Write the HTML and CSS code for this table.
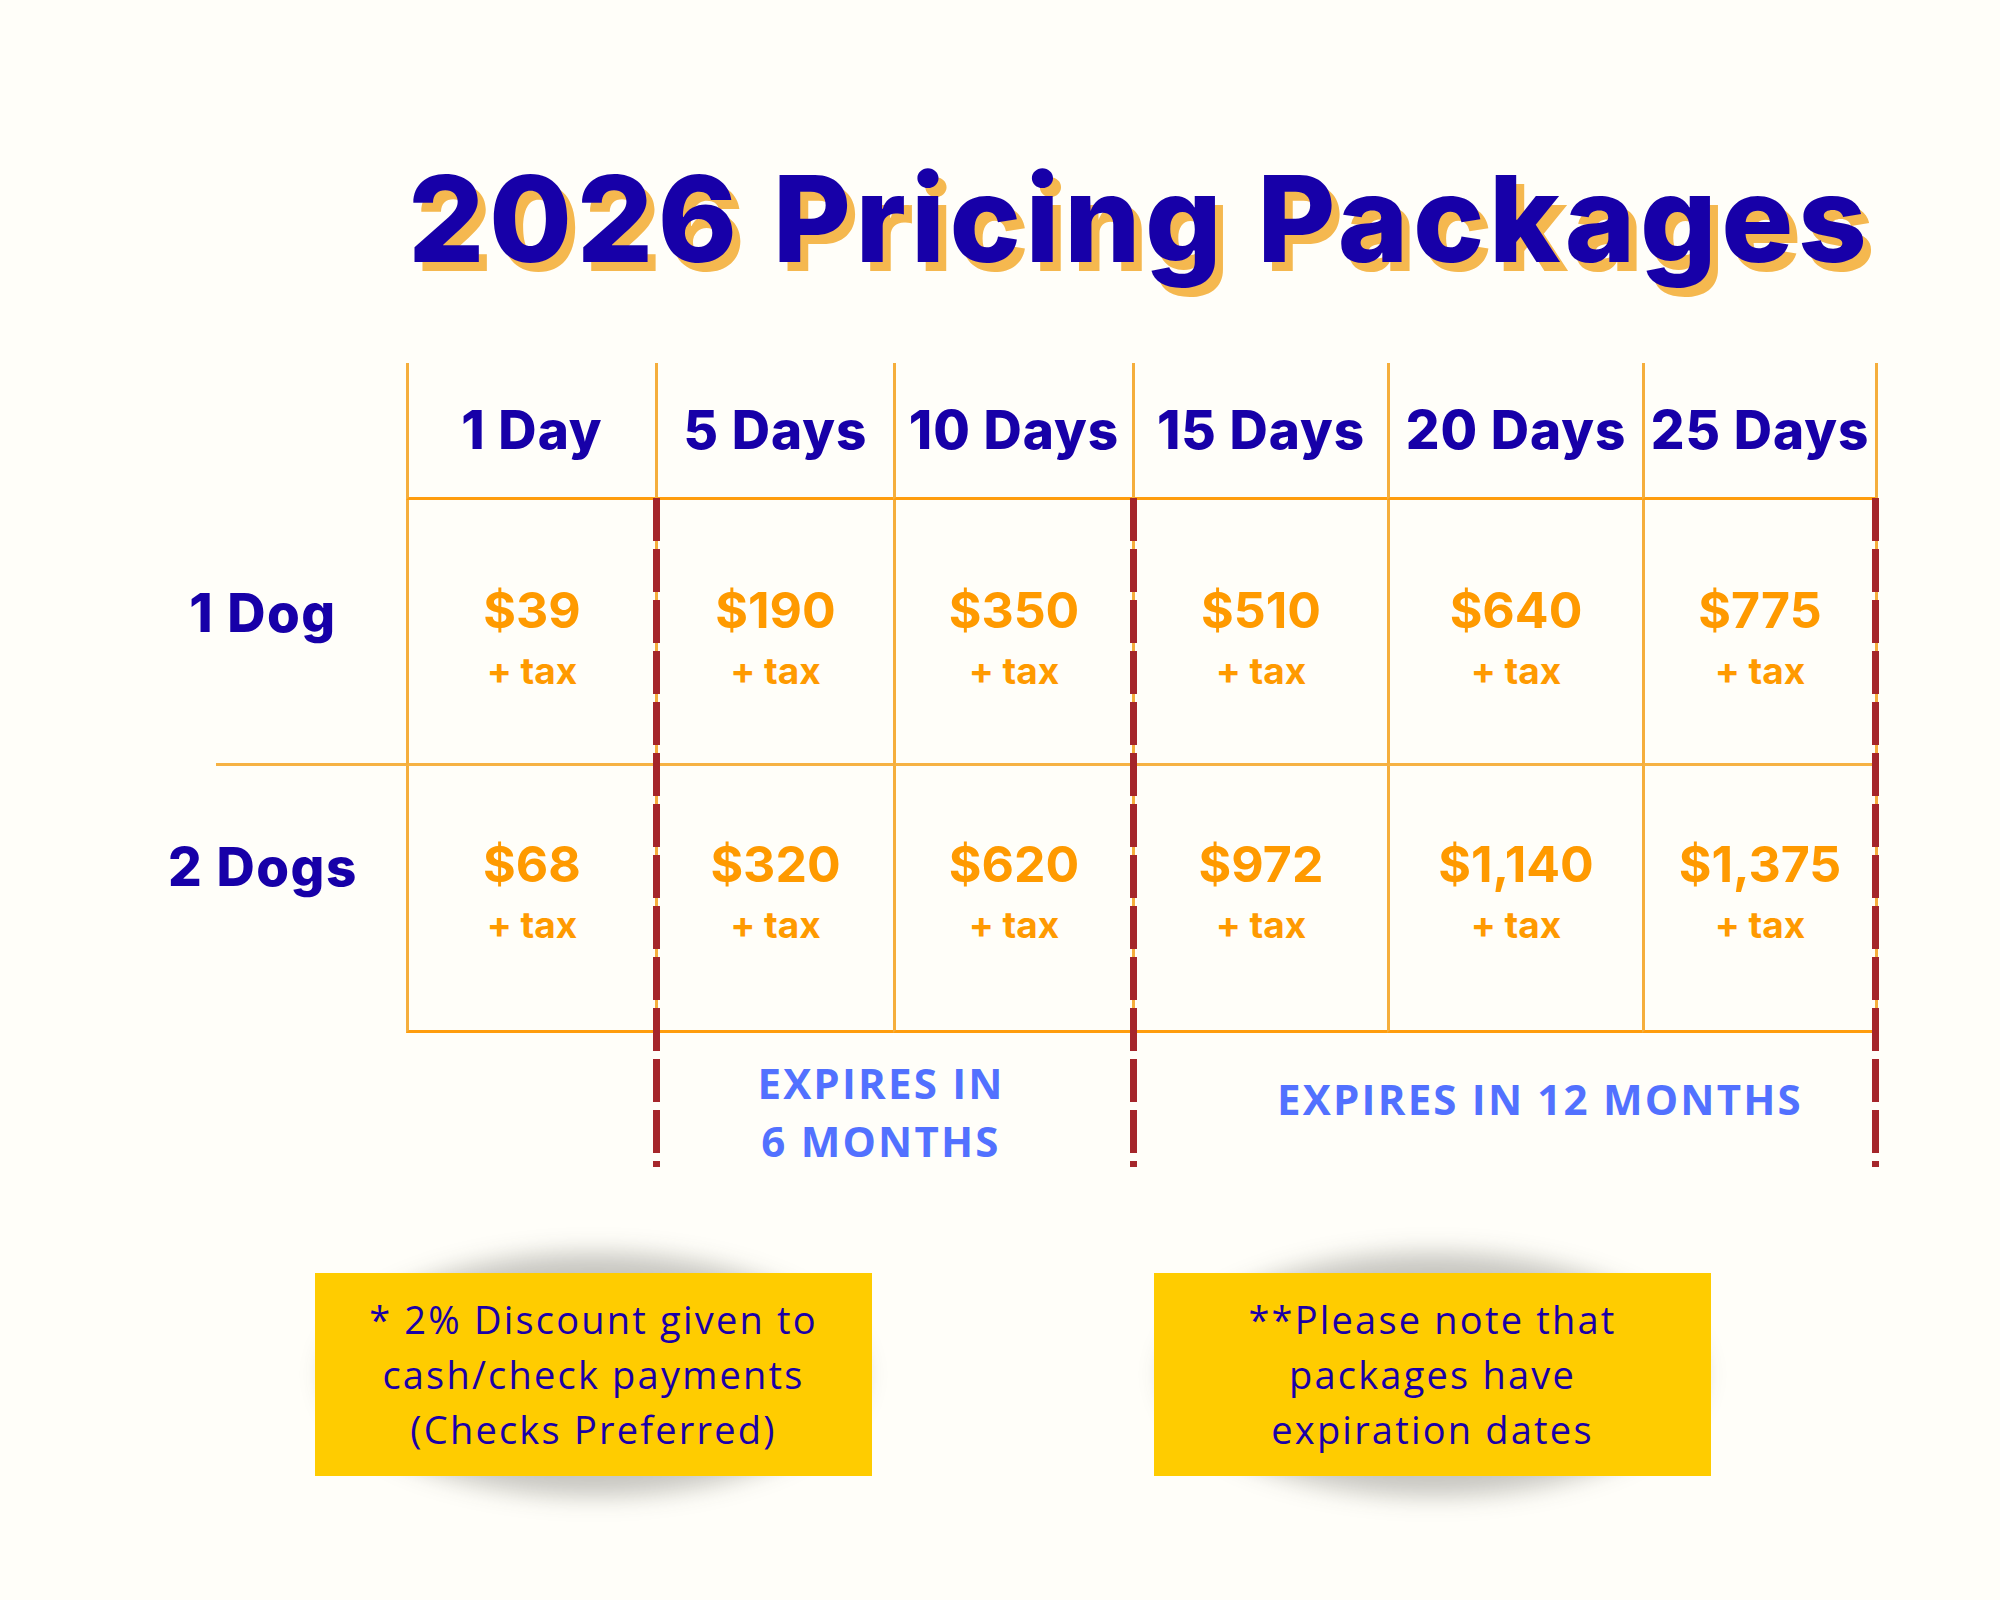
FILE: index.html
```html
<!DOCTYPE html>
<html lang="en">
<head>
<meta charset="utf-8">
<title>2026 Pricing Packages</title>
<link rel="stylesheet" href="styles.css">
</head>
<body>
<main class="page">
  <h1 class="title">2026 Pricing Packages</h1>

  <section class="grid">
    <div class="corner"></div>
    <div class="head">1 Day</div>
    <div class="head">5 Days</div>
    <div class="head">10 Days</div>
    <div class="head">15 Days</div>
    <div class="head">20 Days</div>
    <div class="head last">25 Days</div>

    <div class="label label-1">1 Dog</div>
    <div class="cell row-1"><span class="price">$39</span><span class="tax">+ tax</span></div>
    <div class="cell row-1"><span class="price">$190</span><span class="tax">+ tax</span></div>
    <div class="cell row-1"><span class="price">$350</span><span class="tax">+ tax</span></div>
    <div class="cell row-1"><span class="price">$510</span><span class="tax">+ tax</span></div>
    <div class="cell row-1"><span class="price">$640</span><span class="tax">+ tax</span></div>
    <div class="cell row-1 last"><span class="price">$775</span><span class="tax">+ tax</span></div>

    <div class="label label-2">2 Dogs</div>
    <div class="cell row-2"><span class="price">$68</span><span class="tax">+ tax</span></div>
    <div class="cell row-2"><span class="price">$320</span><span class="tax">+ tax</span></div>
    <div class="cell row-2"><span class="price">$620</span><span class="tax">+ tax</span></div>
    <div class="cell row-2"><span class="price">$972</span><span class="tax">+ tax</span></div>
    <div class="cell row-2"><span class="price">$1,140</span><span class="tax">+ tax</span></div>
    <div class="cell row-2 last"><span class="price">$1,375</span><span class="tax">+ tax</span></div>

    <div class="expires exp-6">EXPIRES IN<br>6 MONTHS</div>
    <div class="expires exp-12">EXPIRES IN 12 MONTHS</div>

    <span class="divider d1"></span>
    <span class="divider d2"></span>
    <span class="divider d3"></span>
  </section>

  <section class="notes">
    <div class="note">* 2% Discount given to<br>cash/check payments<br>(Checks Preferred)</div>
    <div class="note">**Please note that<br>packages have<br>expiration dates</div>
  </section>
</main>
</body>
</html>
```

FILE: styles.css
```css
html {
  margin: 0;
  padding: 0;
  background: #FFFEF9;
}

body {
  margin: 0;
  padding: 0;
}

.page {
  width: 2000px;
  height: 1600px;
  box-sizing: border-box;
  padding-top: 159px;
  font-family: Inter, "Liberation Sans", sans-serif;
  color: #1A00A8;
}

.title {
  margin: 0 0 84px 0;
  padding-left: 408px;
  font-family: Inter, sans-serif;
  font-weight: 800;
  font-size: 120px;
  line-height: 120px;
  letter-spacing: 4.6px;
  color: #1700A8;
  text-shadow: 8px 9px 0 #F5B84F;
  white-space: nowrap;
}

/* ---------- table ---------- */
.grid {
  position: relative;
  margin-left: 120px;
  width: 1758px;
  display: grid;
  grid-template-columns: 286px 249px 238px 239px 255px 255px 236px;
  grid-template-rows: 137px 266px 267px 134px;
}

.head,
.cell {
  box-sizing: border-box;
  border-left: 3px solid #F5AE3C;
  display: flex;
  align-items: center;
  justify-content: center;
}

.head.last,
.cell.last {
  border-right: 3px solid #F5AE3C;
}

.head {
  border-bottom: 3px solid #FF9D0D;
  font-weight: 800;
  font-size: 53px;
  line-height: 53px;
  letter-spacing: 1px;
  white-space: nowrap;
  color: #1700A8;
}

.cell {
  flex-direction: column;
  border-bottom: 3px solid #F6B243;
}

.cell.row-1 { padding-top: 10px; }
.cell.row-2 { padding-bottom: 15px; border-bottom-color: #FF9D0D; }

.price {
  font-weight: 700;
  font-size: 50px;
  line-height: 50px;
  color: #FF9A00;
  white-space: nowrap;
}

.tax {
  margin-top: 17px;
  font-weight: 700;
  font-size: 37px;
  line-height: 37px;
  color: #FF9A00;
  white-space: nowrap;
}

.label {
  display: flex;
  align-items: center;
  justify-content: center;
  font-weight: 800;
  font-size: 53px;
  line-height: 53px;
  letter-spacing: 1.5px;
  color: #1700A8;
  white-space: nowrap;
  box-sizing: border-box;
}

.label-1 {
  padding-bottom: 39px;
  background: linear-gradient(#F6B243, #F6B243) no-repeat right bottom / 190px 3px;
}

.label-2 {
  padding-bottom: 64px;
}

.expires {
  font-family: "Open Sans", sans-serif;
  font-weight: 700;
  font-size: 42px;
  line-height: 58px;
  letter-spacing: 2.2px;
  color: #5271FF;
  text-align: center;
  white-space: nowrap;
}

.exp-6 {
  grid-column: 3 / 5;
  padding-top: 21px;
  padding-right: 25px;
}

.exp-12 {
  grid-column: 5 / 8;
  padding-top: 37px;
  padding-left: 70px;
}

.divider {
  position: absolute;
  top: 135px;
  width: 7px;
  height: 669px;
  background: repeating-linear-gradient(to bottom, #A5262B 0 43px, transparent 43px 51px);
}

.d1 { left: 533px; }
.d2 { left: 1010px; }
.d3 { left: 1752px; }

/* ---------- notes ---------- */
.notes {
  margin-top: 106px;
  padding-left: 315px;
  display: flex;
  gap: 282px;
}

.note {
  position: relative;
  width: 557px;
  height: 203px;
  box-sizing: border-box;
  background: #FFCC00;
  display: flex;
  align-items: center;
  justify-content: center;
  text-align: center;
  font-family: "Open Sans", sans-serif;
  font-weight: 400;
  font-size: 38px;
  line-height: 55px;
  letter-spacing: 2.2px;
  color: #1A00A8;
}

.note::before {
  content: "";
  position: absolute;
  top: -20px;
  bottom: -20px;
  left: 10px;
  right: 10px;
  border-radius: 50%;
  background: rgba(40, 40, 30, 0.26);
  filter: blur(12px);
  z-index: -1;
}
```
